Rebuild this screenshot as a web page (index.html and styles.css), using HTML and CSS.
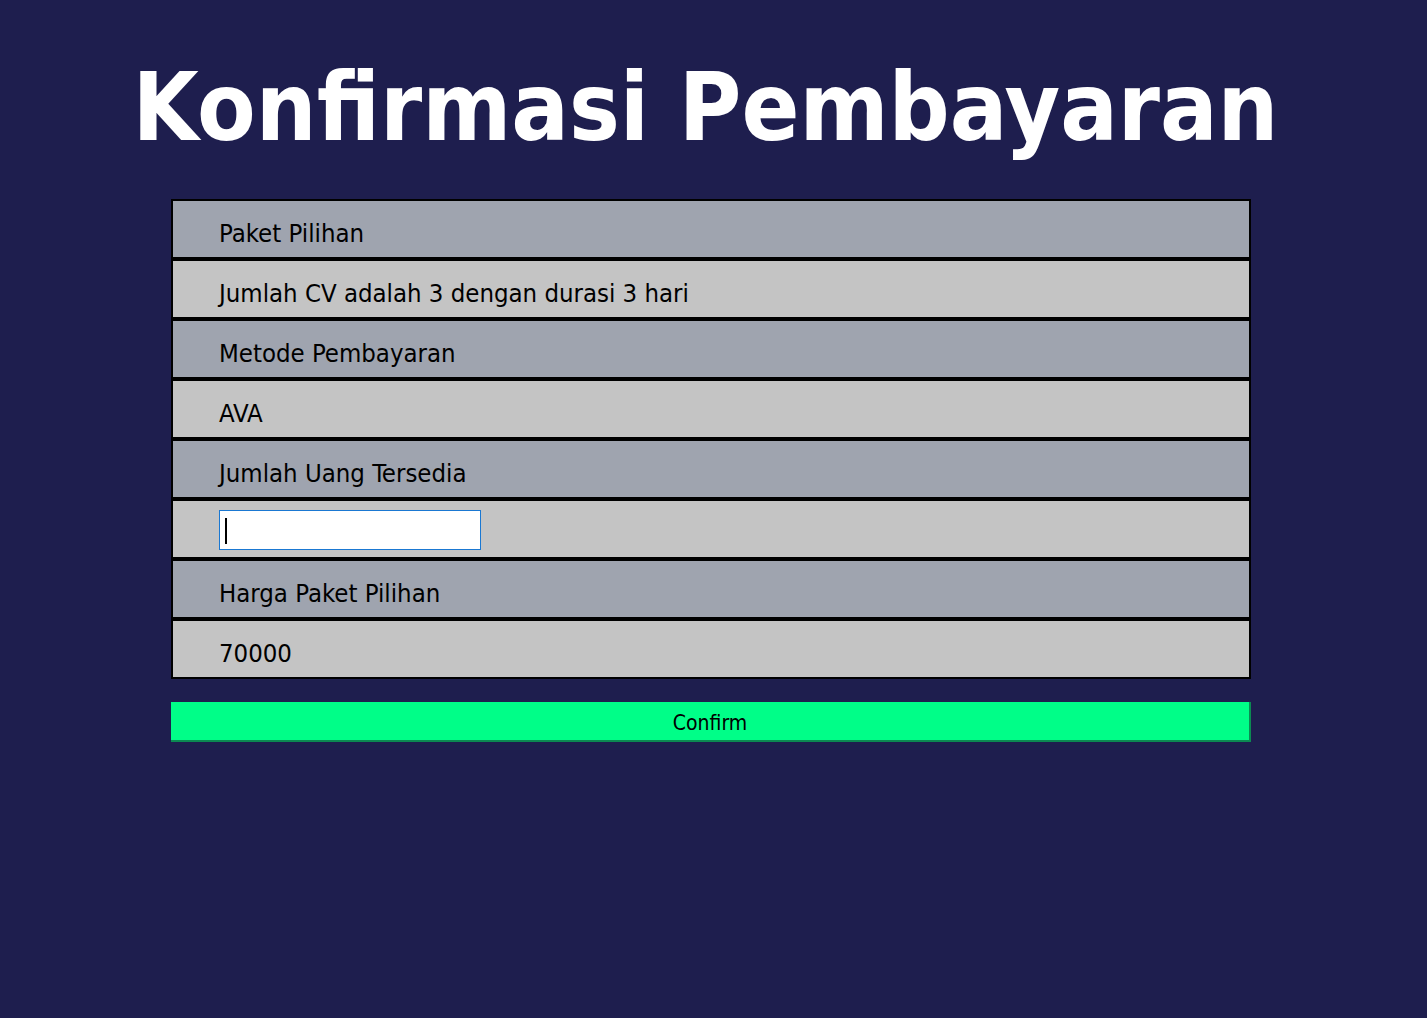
FILE: index.html
```html
<!DOCTYPE html>
<html lang="id">
<head>
<meta charset="utf-8">
<title>Konfirmasi Pembayaran</title>
<link rel="stylesheet" href="styles.css">
</head>
<body>
<div class="page">
  <h1 class="title">Konfirmasi Pembayaran</h1>
  <div class="card">
    <div class="row row-label">Paket Pilihan</div>
    <div class="row row-value">Jumlah CV adalah 3 dengan durasi 3 hari</div>
    <div class="row row-label">Metode Pembayaran</div>
    <div class="row row-value">AVA</div>
    <div class="row row-label">Jumlah Uang Tersedia</div>
    <div class="row row-value row-input"><span class="field"><input class="money" type="text" autofocus><span class="caret"></span></span></div>
    <div class="row row-label">Harga Paket Pilihan</div>
    <div class="row row-value row-last">70000</div>
  </div>
  <button class="confirm" type="button">Confirm</button>
</div>
</body>
</html>
```

FILE: styles.css
```css
html, body {
  margin: 0;
  padding: 0;
  background: #1e1e4e;
}

body {
  min-height: 1018px;
  font-family: "DejaVu Sans Condensed", "DejaVu Sans", Verdana, sans-serif;
  font-stretch: condensed;
  color: #000;
}

.page {
  padding: 0 5px 0 0;
}

.title {
  margin: 0;
  padding: 51px 11px 0 0;
  height: 199px;
  box-sizing: border-box;
  text-align: center;
  color: #fff;
  font-size: 95px;
  font-weight: bold;
  line-height: 113px;
}

.card {
  width: 1076px;
  margin: 0 auto;
  border: 2px solid #000;
}

.row {
  height: 60px;
  box-sizing: border-box;
  padding: 7px 0 0 46px;
  border-bottom: 4px solid #000;
  display: flex;
  align-items: center;
  font-size: 25.5px;
}

.row-last {
  height: 56px;
  border-bottom: none;
}

.row-label {
  background: #9fa4af;
}

.row-value {
  background: #c4c4c4;
}

.row-input {
  padding-top: 2px;
}

.field {
  position: relative;
  display: block;
  width: 262px;
  height: 40px;
}

.money {
  display: block;
  width: 262px;
  height: 40px;
  box-sizing: border-box;
  margin: 0;
  padding: 0 6px;
  border: 1px solid #1a78d2;
  background: #fff;
  font-family: inherit;
  font-size: 24px;
  outline: none;
  caret-color: transparent;
}

.caret {
  position: absolute;
  left: 6px;
  top: 8px;
  width: 2px;
  height: 26px;
  background: #000;
}

.confirm {
  display: block;
  width: 1080px;
  height: 40px;
  margin: 23px auto 0;
  padding: 4px 0 0;
  box-sizing: border-box;
  background: #00fe88;
  border: none;
  border-right: 2px solid #0b8a52;
  border-bottom: 2px solid #0b8a52;
  font-family: inherit;
  font-stretch: condensed;
  font-size: 21px;
  color: #000;
}
```
